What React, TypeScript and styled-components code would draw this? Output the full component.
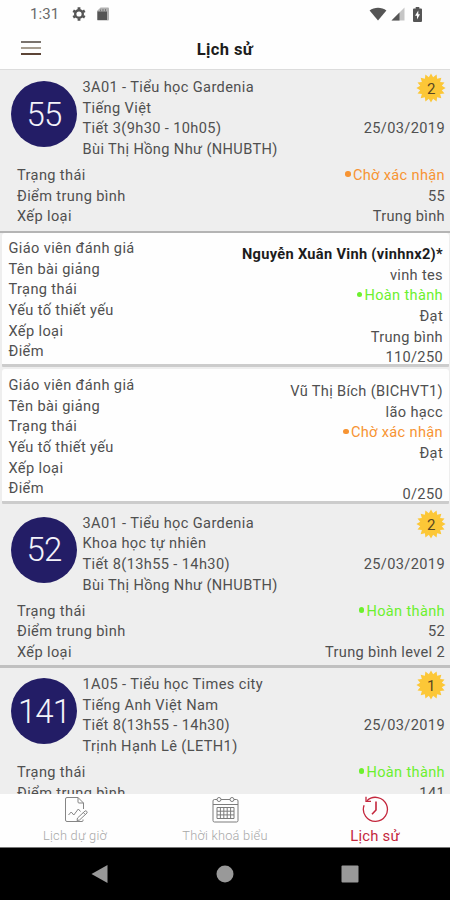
import React from 'react';
import styled, { createGlobalStyle } from 'styled-components';

const GlobalStyle = createGlobalStyle`
  * { box-sizing: border-box; }
  body { margin: 0; background: #fff; font-family: Roboto, "Noto Sans", sans-serif; }
`;

const ROW = 20.65;

const Screen = styled.div`
  width: 450px;
  height: 900px;
  display: flex;
  flex-direction: column;
  overflow: hidden;
  background: #fefefe;
  color: #505050;
  font-size: 14.6px;
  letter-spacing: 0.37px;
`;

const StatusBar = styled.div`
  height: 28px;
  flex: none;
  display: flex;
  align-items: center;
  justify-content: space-between;
  padding: 0 28px 0 30px;
  color: #6a6a6a;
  svg { display: block; }
`;

const StatusGroup = styled.div<{ $gap: number }>`
  display: flex;
  align-items: center;
  gap: ${(p) => p.$gap}px;
`;

const Clock = styled.span`
  width: 28px;
  font-size: 15px;
  letter-spacing: 0.1px;
  margin-right: 2px;
  white-space: nowrap;
`;

const Header = styled.header`
  height: 42px;
  flex: none;
  display: grid;
  grid-template-columns: 62px 1fr 62px;
  align-items: center;
  border-bottom: 1px solid #dcdcdc;
`;

const Burger = styled.button`
  display: grid;
  gap: 4px;
  width: 20px;
  margin: 0 0 2px 21px;
  padding: 0;
  border: 0;
  background: none;
`;

const BurgerLine = styled.span<{ $color: string }>`
  height: 2px;
  background: ${(p) => p.$color};
`;

const Title = styled.h1`
  margin: 1px 0 0;
  text-align: center;
  font-size: 16.5px;
  font-weight: 700;
  letter-spacing: 0.4px;
  color: #1c1c1c;
`;

const List = styled.main`
  height: 724px;
  flex: none;
  overflow: hidden;
  background: #eee;
`;

const Summary = styled.section<{ $height: number; $top: number }>`
  height: ${(p) => p.$height}px;
  padding: ${(p) => p.$top}px 5px 0 11px;
`;

const Lesson = styled.div`
  display: grid;
  grid-template-columns: 66px 1fr auto;
  column-gap: 5.5px;
  height: ${ROW * 4}px;
`;

const Score = styled.div`
  width: 66px;
  height: 66px;
  margin-top: 4px;
  display: flex;
  align-items: center;
  justify-content: center;
  border-radius: 50%;
  background: #231d66;
  color: #f4f3fa;
  font-size: 33px;
  font-weight: 300;
  letter-spacing: -0.9px;
`;

const Line = styled.div<{ $color?: string; $bold?: boolean }>`
  height: ${ROW}px;
  line-height: ${ROW}px;
  white-space: nowrap;
  ${(p) => p.$color && `color: ${p.$color};`}
  ${(p) => p.$bold && 'font-weight: 700; color: #1c1c1c; letter-spacing: 0.32px;'}
`;

const LessonSide = styled.div`
  display: flex;
  flex-direction: column;
  align-items: flex-end;
`;

const BadgeSlot = styled.div`
  height: ${ROW * 2}px;
  margin-right: -1px;
  margin-top: -4px;
  margin-bottom: 4px;
`;

const Pairs = styled.div<{ $summary?: boolean }>`
  display: flex;
  justify-content: space-between;
  ${(p) => p.$summary && 'margin: 5.4px 0 0 6px;'}
`;

const Column = styled.div<{ $right?: boolean }>`
  text-align: ${(p) => (p.$right ? 'right' : 'left')};
  ${(p) => p.$right && 'letter-spacing: 0.34px;'}
`;

const Rule = styled.hr<{ $height: number; $color: string }>`
  height: ${(p) => p.$height}px;
  margin: 0;
  border: 0;
  background: ${(p) => p.$color};
`;

const Review = styled.article<{ $height: number; $top: number }>`
  height: ${(p) => p.$height}px;
  margin: 0 1.5px 0 2px;
  padding: ${(p) => p.$top}px 5.5px 0 6.5px;
  background: #fefefe;
  border-radius: 3px 3px 1px 1px;
  border-bottom: 3px solid #ccc;
`;

const ReviewValues = styled(Column)`
  margin-top: 6px;
`;

const Dot = styled.i`
  display: inline-block;
  width: 5.5px;
  height: 5.5px;
  margin-right: 2px;
  border-radius: 50%;
  vertical-align: 3px;
  background: currentColor;
`;

const Tabs = styled.nav`
  height: 54px;
  flex: none;
  display: grid;
  grid-template-columns: repeat(3, 1fr);
  border-bottom: 1px solid #777;
`;

const Tab = styled.button<{ $active?: boolean }>`
  display: flex;
  flex-direction: column;
  align-items: center;
  padding: 2px 0 0;
  border: 0;
  background: none;
  font: inherit;
  font-size: ${(p) => (p.$active ? 14.8 : 12.8)}px;
  font-weight: ${(p) => (p.$active ? 400 : 300)};
  letter-spacing: 0.25px;
  line-height: 18px;
  color: ${(p) => (p.$active ? '#c4273d' : '#a8a8a8')};
  svg { display: block; margin-bottom: 3px; }
`;

const TabIcon = styled.span<{ $shift: number }>`
  display: block;
  padding-left: ${(p) => p.$shift}px;
`;

const SystemNav = styled.footer`
  height: 52px;
  flex: none;
  display: flex;
  justify-content: space-between;
  align-items: center;
  padding: 0 91px;
  background: #000;
`;

const ORANGE = '#f79433';
const GREEN = '#6cf02e';

const SPIKES = 16;
const starPoints = Array.from({ length: SPIKES * 2 }, (_, i) => {
  const r = i % 2 ? 11 : 14.6;
  const a = (i * Math.PI) / SPIKES - Math.PI / 2;
  return `${(15 + r * Math.cos(a)).toFixed(2)},${(15 + r * Math.sin(a)).toFixed(2)}`;
}).join(' ');

const Badge = ({ count }: { count: number }) => (
  <svg width="30" height="30" viewBox="0 0 30 30">
    <polygon points={starPoints} fill="#fcc737" />
    <text x="15.3" y="21" textAnchor="middle" fontSize="15" letterSpacing="0" fill="#5a4722">{count}</text>
  </svg>
);

type Status = 'pending' | 'done';

const StatusLine = ({ status }: { status: Status }) => (
  <Line $color={status === 'done' ? GREEN : ORANGE}>
    <Dot />
    {status === 'done' ? 'Hoàn thành' : 'Chờ xác nhận'}
  </Line>
);

interface SummaryProps {
  height: number;
  top: number;
  score: number;
  info: string[];
  date: string;
  count: number;
  status: Status;
  grade?: string;
}

const SummaryCard = ({ height, top, score, info, date, count, status, grade }: SummaryProps) => (
  <Summary $height={height} $top={top}>
    <Lesson>
      <Score>{score}</Score>
      <div>{info.map((t) => <Line key={t}>{t}</Line>)}</div>
      <LessonSide>
        <BadgeSlot><Badge count={count} /></BadgeSlot>
        <Line>{date}</Line>
      </LessonSide>
    </Lesson>
    <Pairs $summary>
      <Column>
        <Line>Trạng thái</Line>
        <Line>Điểm trung bình</Line>
        {grade && <Line>Xếp loại</Line>}
      </Column>
      <Column $right>
        <StatusLine status={status} />
        <Line>{score}</Line>
        {grade && <Line>{grade}</Line>}
      </Column>
    </Pairs>
  </Summary>
);

interface ReviewProps {
  height: number;
  top: number;
  teacher: string;
  bold?: boolean;
  lesson: string;
  status: Status;
  grade: string;
  points: string;
}

const reviewLabels = ['Giáo viên đánh giá', 'Tên bài giảng', 'Trạng thái', 'Yếu tố thiết yếu', 'Xếp loại', 'Điểm'];

const ReviewCard = ({ height, top, teacher, bold, lesson, status, grade, points }: ReviewProps) => (
  <Review $height={height} $top={top}>
    <Pairs>
      <Column>{reviewLabels.map((l) => <Line key={l}>{l}</Line>)}</Column>
      <ReviewValues $right>
        <Line $bold={bold}>{teacher}</Line>
        <Line>{lesson}</Line>
        <StatusLine status={status} />
        <Line>Đạt</Line>
        <Line>{grade}</Line>
        <Line>{points}</Line>
      </ReviewValues>
    </Pairs>
  </Review>
);

const GearIcon = () => (
  <svg width="14" height="14" viewBox="0 0 14 14" fill="none" stroke="#555">
    <circle cx="7" cy="7" r="3.8" strokeWidth="2.4" />
    <path d="M7 .3v2.2M7 11.5v2.2M1.2 3.7l1.9 1.1M10.9 9.2l1.9 1.1M1.2 10.3l1.9-1.1M10.9 4.8l1.9-1.1" strokeWidth="2.8" />
  </svg>
);

const CardIcon = () => (
  <svg width="12" height="14" viewBox="0 0 12 14">
    <path d="M3.6.5H11a1 1 0 0 1 1 1v11a1 1 0 0 1-1 1H1a1 1 0 0 1-1-1V4z" fill="#b0b0b0" />
    <path d="M.5 4.500h9.500v8.500H.5z" fill="#555" />
    <path d="M3.500 2.500v2M6 2v2.500M8.500 2v2.500" stroke="#777" />
  </svg>
);

const WifiIcon = () => (
  <svg width="18" height="14" viewBox="0 0 18 14">
    <path d="M.6 3.4C5.2-.2 12.800-.2 17.400 3.400L9 13.600z" fill="#555" />
  </svg>
);

const SignalIcon = () => (
  <svg width="14" height="14" viewBox="0 0 14 14">
    <path d="M13.500.5v13H.5z" fill="#c6c6c6" />
    <path d="M8.500 5.500v8H.5z" fill="#555" />
  </svg>
);

const BatteryIcon = () => (
  <svg width="9" height="15" viewBox="0 0 9 15">
    <path d="M2.700 0h3.600v1.500H8a1 1 0 0 1 1 1V14a1 1 0 0 1-1 1H1a1 1 0 0 1-1-1V2.500a1 1 0 0 1 1-1h1.700z" fill="#555" />
    <path d="M5.300 3.500 2 8.800h2v3.700L7 7.300H5.300z" fill="#fff" />
  </svg>
);

const ReportIcon = () => (
  <svg width="25" height="28" viewBox="0 0 25 28" fill="none" stroke="#858585" strokeLinejoin="round">
    <path d="M19 23.500v1q0 1-1 1H3q-1.500 0-1.500-1.500V3Q1.500 1.500 3 1.500h11l5.500 5.500v6M14 1.500V6q0 1 1 1h4.500" />
    <path d="m4.500 19 2.700-3 2.600 3 4.500-6 2.200 2.500" />
    <path d="m13.500 22 7.500-7q1-.5 1.700.3t.3 1.700l-7.500 7-2.500.500zM19.300 16.500l2 2" />
  </svg>
);

const CalendarIcon = () => (
  <svg width="27" height="28" viewBox="0 0 27 28" fill="none" stroke="#7c7c7c">
    <rect x="1" y="3.500" width="25" height="22.500" rx="1.500" />
    <path d="M1 8.500h25" />
    <g fill="#fff"><circle cx="7" cy="3.500" r="2" /><circle cx="20" cy="3.500" r="2" /></g>
    <path d="M5 11.500h17v11H5zM5 15.200h17M5 18.900h17M8.400 11.500v11M11.800 11.500v11M15.200 11.500v11M18.600 11.500v11" />
  </svg>
);

const HistoryIcon = () => (
  <svg width="27" height="28" viewBox="0 0 27 28" fill="none" stroke="#c4273d" strokeWidth="1.300">
    <path d="M5 4.700A12 12 0 1 1 2.100 9.200" />
    <path d="M4 .8v4.600h5" />
    <path d="M14 5.500V14l-4 4.300" strokeWidth="1.600" />
  </svg>
);

export default function App() {
  return (
    <Screen>
      <GlobalStyle />
      <StatusBar>
        <StatusGroup $gap={11.5}>
          <Clock>1:31</Clock>
          <GearIcon />
          <CardIcon />
        </StatusGroup>
        <StatusGroup $gap={4}>
          <WifiIcon />
          <SignalIcon />
          <span />
          <BatteryIcon />
        </StatusGroup>
      </StatusBar>
      <Header>
        <Burger aria-label="Menu">
          <BurgerLine $color="#7a736d" />
          <BurgerLine $color="#a69d90" />
          <BurgerLine $color="#5c4436" />
        </Burger>
        <Title>Lịch sử</Title>
      </Header>
      <List>
        <SummaryCard
          height={161} top={7} score={55} date="25/03/2019" count={2} status="pending" grade="Trung bình"
          info={['3A01 - Tiểu học Gardenia', 'Tiếng Việt', 'Tiết 3(9h30 - 10h05)', 'Bùi Thị Hồng Như (NHUBTH)']}
        />
        <Rule $height={2} $color="#b4b4b4" />
        <ReviewCard
          height={134} top={5} teacher="Nguyễn Xuân Vinh (vinhnx2)*" bold lesson="vinh tes" status="done"
          grade="Trung bình" points="110/250"
        />
        <Rule $height={2} $color="#eee" />
        <ReviewCard
          height={135} top={6.2} teacher="Vũ Thị Bích (BICHVT1)" lesson="lão hạcc" status="pending" grade="" points="0/250"
        />
        <SummaryCard
          height={161} top={8.8} score={52} date="25/03/2019" count={2} status="done" grade="Trung bình level 2"
          info={['3A01 - Tiểu học Gardenia', 'Khoa học tự nhiên', 'Tiết 8(13h55 - 14h30)', 'Bùi Thị Hồng Như (NHUBTH)']}
        />
        <Rule $height={3} $color="#c0c0c0" />
        <SummaryCard
          height={126} top={6} score={141} date="25/03/2019" count={1} status="done"
          info={['1A05 - Tiểu học Times city', 'Tiếng Anh Việt Nam', 'Tiết 8(13h55 - 14h30)', 'Trịnh Hạnh Lê (LETH1)']}
        />
      </List>
      <Tabs>
        <Tab><TabIcon $shift={3}><ReportIcon /></TabIcon>Lịch dự giờ</Tab>
        <Tab><TabIcon $shift={0}><CalendarIcon /></TabIcon>Thời khoá biểu</Tab>
        <Tab $active><TabIcon $shift={0}><HistoryIcon /></TabIcon>Lịch sử</Tab>
      </Tabs>
      <SystemNav>
        <svg width="17" height="20" viewBox="0 0 17 20"><path d="M16.500 1v18L.5 10z" fill="#999" /></svg>
        <svg width="18" height="18" viewBox="0 0 18 18"><circle cx="9" cy="9" r="8.500" fill="#999" /></svg>
        <svg width="18" height="18" viewBox="0 0 18 18"><rect x=".5" y=".5" width="17" height="17" rx="1" fill="#999" /></svg>
      </SystemNav>
    </Screen>
  );
}
